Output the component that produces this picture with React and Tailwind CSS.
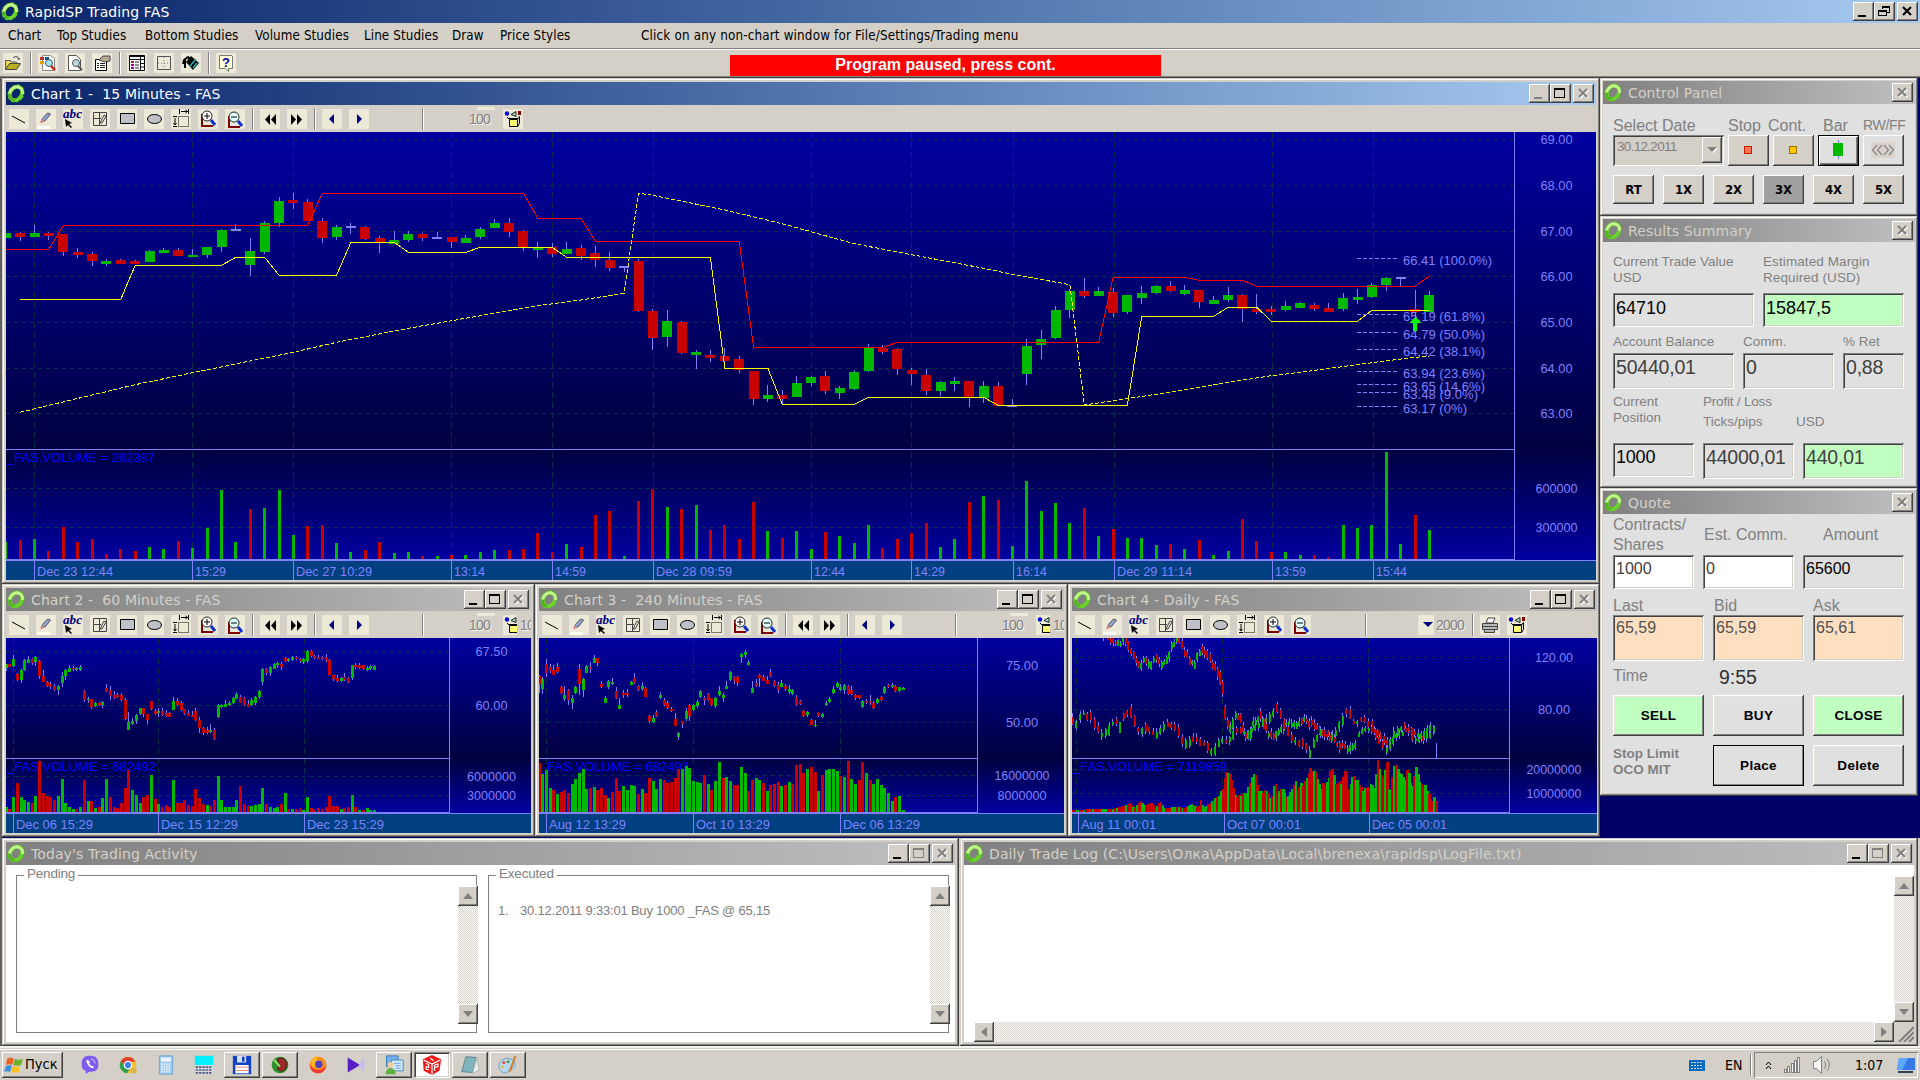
import React from 'react';

const bevel = 'shadow-[inset_-1px_-1px_0_#404040,inset_1px_1px_0_#ffffff,inset_-2px_-2px_0_#808080]';
const raised = `bg-[#d4d0c8] ${bevel}`;
const sunken = 'shadow-[inset_1px_1px_0_#808080,inset_-1px_-1px_0_#ffffff,inset_2px_2px_0_#404040,inset_-2px_-2px_0_#d4d0c8]';
const frame = 'bg-[#d4d0c8] shadow-[inset_-1px_-1px_0_#404040,inset_1px_1px_0_#d4d0c8,inset_-2px_-2px_0_#808080,inset_2px_2px_0_#ffffff]';
const ui = 'font-["DejaVu_Sans_Condensed","DejaVu_Sans",sans-serif]';
const caption = 'font-["DejaVu_Sans",sans-serif]';
const activeBar = 'bg-linear-to-r from-[#0a246a] to-[#a6caf0] text-white';
const idleBar = 'bg-linear-to-r from-[#808080] to-[#c0c0c0] text-[#d4d0c8]';

// "g309,324,305,342" -> colour, body top, body bottom, high, low
const parse = (s) => s.trim().split(/\s+/).map((t) => [t[0], ...t.slice(1).split(',').map(Number)]);

const candles1 = parse(`g309,324,305,342 r309,321,306,333 g309,321,284,322 r309,318,306,330 r312,366,312,378 r366,375,354,384
r372,393,367,408 g393,402,387,408 r390,402,387,402 r393,402,390,402 g363,396,360,396 g360,369,354,369 r360,378,354,378
g375,381,357,381 g351,375,351,384 g300,351,297,366 d297,302,282,302 g363,405,324,438 g279,366,273,372 g213,279,201,291
r210,219,189,237 r216,273,207,273 r273,324,264,339 g291,321,285,330 d288,293,279,312 r291,327,288,330 r324,336,318,369
g330,342,303,342 g312,330,303,336 r312,324,309,333 d321,326,306,326 r321,336,321,354 g324,339,315,339 g297,321,291,327
g279,294,267,294 r279,306,264,321 r303,351,300,363 g354,360,336,384 r351,372,339,381 g357,372,336,372 r354,378,345,390
r369,390,348,411 r390,414,366,423 d409,414,409,426 r393,543,387,546 r543,624,537,660 g573,621,540,651 r576,669,573,672
g666,675,660,717 r675,684,660,696 r678,693,654,702 r687,720,678,729 r723,807,723,825 g795,807,765,816 r795,807,780,822
g759,801,738,801 g741,759,738,768 r738,783,723,792 g774,789,768,807 g726,777,720,780 g654,723,642,726 r654,666,645,672
r657,717,654,735 r720,732,714,765 r735,783,717,795 g756,783,753,798 g753,762,741,783 r753,804,753,831 g768,804,753,819
r768,828,756,828 d825,830,807,830 g648,732,627,765 g627,645,600,687 g540,624,528,627 g483,540,477,564 r483,498,444,504
g483,498,471,498 r486,549,474,561 g495,546,495,552 g489,504,468,522 g468,489,465,492 r468,483,453,486 g480,492,465,495
r480,516,480,534 g510,522,498,522 g495,510,471,516 r495,537,492,576 r537,546,491,552 r537,546,528,555 g528,540,513,543
g519,534,516,534 r525,537,519,543 r534,546,519,546 g504,537,489,543 g501,510,477,522 g465,501,459,504 g444,465,441,483
d441,446,441,468 r537,546,480,570 g495,546,483,546`);

const volume1 = parse(`g1236 r1230 g1227 r1263 r1191 r1236 r1227 r1272 r1257 r1263 g1251 g1257 r1233 g1254 g1194 g1080 g1236 r1137 g1134
g1080 g1215 r1188 r1185 g1239 g1266 r1260 r1236 g1269 g1266 r1278 g1278 r1275 g1275 g1266 g1260 r1260 r1257 r1209 r1266 g1242
r1251 r1155 r1143 g1278 r1113 r1077 g1131 r1137 g1125 r1200 r1185 r1227 r1116 g1203 r1224 g1203 g1257 r1206 g1218 g1239 g1185
r1254 r1227 r1209 r1179 g1251 g1227 r1116 g1098 r1110 g1248 g1053 g1143 g1119 g1179 r1134 g1218 r1197 g1224 g1224 g1245 r1242
g1257 r1230 g1275 g1263 r1167 r1233 r1266 g1266 g1275 r1275 r1281 g1185 g1194 g1185 g966 g1242 r1155 g1200`);

const candles2 = parse(`g252,264,252,272 r252,262,252,262 g237,258,225,262 r281,300,278,302 g270,300,267,308 g241,270,238,272 g237,250,228,250
r237,248,234,254 g231,247,228,257 r242,288,240,298 r288,306,270,306 r305,318,302,322 r312,322,307,326 r318,331,312,333
g318,329,315,344 g288,310,276,321 g270,288,267,300 g264,275,255,276 r264,268,258,273 g263,271,262,273 g262,270,255,272
r333,360,330,366 g357,361,351,370 r358,381,357,387 g370,379,366,381 r368,375,366,378 g366,375,364,384 r324,336,312,336
r331,348,319,360 r346,353,334,358 r345,351,339,354 r345,361,339,363 r360,418,354,420 g427,450,396,450 g423,432,414,435
g405,423,402,432 g384,402,384,405 r384,402,384,410 r402,420,402,432 r363,387,363,391 r393,401,387,406 g393,400,383,412
r393,405,384,408 r399,408,390,411 r399,410,396,412 g363,390,350,390 r363,374,354,378 r368,390,363,392 r388,402,387,404
r399,407,390,408 r405,410,394,412 r393,420,384,424 r420,444,411,458 r444,459,441,464 r450,458,440,462 g450,456,432,460
r450,478,444,480 g375,411,372,414 g375,381,373,384 g372,381,360,381 g369,376,363,378 g354,370,351,372 g342,356,336,358
r351,368,345,370 r354,376,350,378 r373,380,360,382 g361,374,355,378 g351,369,348,374 g333,351,330,357 g267,306,264,315
r267,279,264,284 g261,279,258,288 g252,267,249,268 g249,256,246,265 r252,262,246,270 r234,243,230,246 g237,244,234,246
g231,241,228,243 r231,238,228,240 r237,244,234,248 g238,246,234,252 g213,242,210,248 r213,227,211,230 r228,234,225,238
r230,236,225,238 r231,237,228,240 r232,244,222,246 r240,284,238,286 r286,297,284,302 r294,304,285,306 g293,303,290,306
r292,300,279,302 r294,305,292,308 g255,294,254,300 r255,262,249,266 r255,264,249,268 r255,267,254,269 g264,270,258,272
g258,267,254,270 g257,269,254,270`);

const volume2 = parse(`g681 r687 g651 r609 g651 g660 g666 r669 g648 r543 r639 r648 r651 r660 g648 g597 g669 g681 g687 r687 g681 r600 g663
r663 g684 r681 g654 g597 r651 r681 r684 r669 r624 r570 g630 g645 g669 r651 r645 g585 r657 g672 r681 r675 r681 g600 r669 r669
r660 r675 r678 r627 r654 r672 g675 r678 r660 g588 g660 g681 g681 g681 g660 r618 r672 r678 g678 g675 g672 g624 r672 g681 g684
g681 r672 g639 r687 g687 r687 r684 g690 g651 r684 r690 r684 r687 r681 r648 r678 r678 g687 r684 r681 g645 r681 g690 r690 g684
g690 g690`);

const candles3 = parse(`r288,312,285,340 g297,328,291,342 r252,280,237,290 r262,272,252,280 r270,284,255,286 r261,276,248,278 r321,340,318,342
g346,358,319,362 r330,360,328,375 g354,370,345,386 g322,340,318,342 r267,312,252,344 g297,330,294,350 g258,278,256,280
r261,267,246,280 g234,249,226,250 r235,250,234,258 r312,322,303,324 g354,368,348,370 g303,320,301,328 g306,312,294,315
r333,354,321,356 g374,386,354,388 r339,346,330,354 r339,344,326,350 g305,314,303,316 r293,308,279,312 r318,330,314,333
g318,328,306,332 r324,350,321,352 r408,424,405,428 g414,425,404,428 r396,407,390,410 g345,354,336,356 r360,376,355,378
r369,384,364,387 r388,393,381,395 r417,437,400,438 g459,472,456,480 r423,432,423,444 g393,418,384,424 r376,408,372,424
g374,391,371,394 g366,379,360,384 g333,352,330,354 r354,360,348,376 r342,360,339,364 r355,375,354,378 g354,378,352,384
g333,345,318,348 g345,353,338,366 g319,326,302,328 g277,300,273,302 r291,302,288,312 r291,309,288,318 g221,232,219,249
g216,226,210,234 g245,254,240,256 g324,339,303,340 r308,317,297,322 r285,295,282,320 r291,303,286,304 r300,312,288,312
r276,288,267,290 r304,317,301,320 r315,330,307,340 g309,320,299,322 r318,328,312,332 g328,336,315,342 g330,342,328,344
r352,375,346,378 r363,373,361,376 r394,408,390,410 g395,405,392,410 r420,434,418,436 g434,438,421,441 r397,408,396,411
g403,410,400,413 g368,376,362,378 g357,366,351,369 g328,340,318,343 g310,321,305,324 g322,330,312,333 g315,330,313,342
r318,342,315,344 r330,342,318,345 r345,355,342,360 r346,354,345,358 g363,381,360,384 r363,369,357,372 r363,370,345,374
r369,385,364,388 g357,370,354,372 r352,360,348,363 g322,338,319,342 r315,321,312,325 g315,321,309,323 r318,334,316,337
g322,333,320,336 g324,330,322,331`);

const volume3 = parse(`r549 g582 g570 g624 r630 g642 r636 r630 r639 g612 g597 g579 g567 g627 r624 g621 r630 r624 r645 g654 r636 r594 r633
g618 g630 g615 g618 r642 g627 r639 r594 g603 g627 g597 r600 r609 r606 r594 r567 g567 g558 g564 g603 g606 g609 r585 g612 r630
g603 g546 r594 g591 g603 r615 r615 g561 g579 r633 r600 g594 g600 r609 g633 r615 r612 r606 g618 r615 g606 r612 r555 r552 r579
g567 r561 r576 g633 r585 g570 g567 g567 g573 r588 g591 r543 g597 g612 r600 r546 g579 r600 g612 g597 g615 g624 g639 g663 r651
g648 g690`);

const redBand = [[0, 358], [3, 358], [4, 286], [21, 286], [22, 190], [36, 190], [37, 265], [40, 265], [41, 334], [51, 334], [52, 652], [61, 652], [62, 637], [76, 637], [77, 442], [82, 442], [83, 451], [86, 451], [87, 469], [98, 469], [99, 438]];
const yellowBand = [[1, 508], [8, 508], [9, 406], [15, 406], [16, 382], [18, 382], [19, 436], [23, 436], [24, 337], [27, 337], [28, 367], [32, 367], [33, 352], [38, 352], [39, 382], [49, 382], [50, 715], [53, 715], [54, 823], [59, 823], [60, 802], [68, 802], [69, 826], [78, 826], [79, 559], [84, 559], [85, 532], [87, 532], [88, 574], [94, 574], [95, 541], [99, 541]];
const sar = [[1, 847], [3, 826], [6, 795], [9, 764], [13, 728], [17, 693], [20, 667], [23, 637], [28, 595], [33, 557], [37, 527], [40, 510], [43, 490], [44, 190], [45, 196], [50, 240], [54, 281], [56, 305], [59, 341], [63, 374], [68, 415], [70, 433], [74, 464], [75, 825], [80, 793], [85, 757], [88, 737], [90, 727], [95, 698], [98, 682], [99, 679]];
const fib = [[385, '66.41 (100.0%)', 89], [553, '65.19 (61.8%)', 82], [607, '64.79 (50.0%)', 82], [658, '64.42 (38.1%)', 82], [724, '63.94 (23.6%)', 82], [763, '63.65 (14.6%)', 82], [787, '63.48 (9.0%)', 75], [829, '63.17 (0%)', 64]];

// Daily chart: series given as [x, mid] knots, filled in between
const dailyA = [[122, 160], [150, 185], [165, 195], [188, 178], [200, 212], [220, 245], [232, 262], [245, 236], [257, 262], [275, 235], [290, 255], [310, 240], [325, 195], [343, 175], [358, 215], [385, 260], [408, 205], [425, 225], [445, 258], [460, 290], [470, 330], [480, 420], [490, 450], [508, 405], [522, 415], [535, 462], [548, 470], [560, 430], [580, 405], [600, 460], [625, 465], [655, 435], [680, 435], [705, 420], [745, 440], [765, 468], [785, 475], [805, 490], [832, 510], [855, 490]];
const dailyB = [[34, 425], [45, 437], [58, 410], [72, 405], [93, 412], [105, 445], [122, 470], [135, 460], [150, 430], [158, 415], [168, 450], [180, 410], [207, 400], [220, 435], [232, 465], [242, 435], [270, 465], [285, 455], [303, 430], [316, 430], [335, 440], [348, 465], [358, 500], [380, 480], [392, 470], [408, 490], [425, 495], [443, 520], [455, 495], [475, 480], [490, 475], [515, 445], [535, 465], [560, 440], [600, 420], [628, 385], [650, 430], [675, 490], [700, 485], [722, 520], [740, 475], [765, 455], [785, 470], [810, 440], [832, 385], [850, 430], [880, 420], [905, 442], [925, 488], [950, 510], [975, 450], [1000, 440], [1030, 478], [1060, 470], [1094, 450]];
const dailyC = [[866, 466], [880, 455], [900, 445], [930, 465], [955, 495], [980, 460], [1010, 450], [1045, 468], [1075, 440], [1090, 448]];
const dailyVol = [[36, 690], [100, 687], [150, 688], [190, 675], [200, 670], [215, 684], [233, 663], [245, 678], [262, 666], [275, 684], [289, 663], [300, 684], [340, 681], [360, 684], [378, 672], [400, 682], [408, 657], [415, 684], [430, 672], [450, 650], [470, 625], [478, 582], [486, 573], [497, 595], [508, 640], [520, 648], [540, 640], [548, 610], [560, 582], [568, 585], [575, 630], [590, 630], [612, 650], [623, 606], [630, 640], [645, 624], [660, 650], [672, 625], [682, 600], [690, 642], [695, 600], [705, 618], [724, 567], [740, 573], [755, 618], [765, 612], [775, 600], [788, 561], [800, 612], [815, 606], [828, 561], [837, 624], [848, 586], [862, 597], [878, 635], [890, 612], [912, 615], [921, 543], [935, 590], [948, 548], [955, 650], [962, 594], [972, 546], [985, 570], [1000, 600], [1008, 561], [1020, 618], [1032, 564], [1045, 612], [1060, 612], [1070, 640], [1080, 663], [1087, 651], [1094, 660]];

const rnd = (n) => {
  const v = Math.sin(n * 12.9898) * 43758.5453;
  return v - Math.floor(v);
};
const lerp = (knots, x) => {
  const i = Math.max(1, knots.findIndex((k) => k[0] >= x));
  const [x0, y0] = knots[i - 1];
  const [x1, y1] = knots[i];
  return y0 + ((y1 - y0) * (x - x0)) / (x1 - x0);
};
const fill = (knots, step) => {
  const out = [];
  for (let x = knots[0][0]; x <= knots[knots.length - 1][0]; x += step) out.push([x, lerp(knots, x)]);
  return out;
};
const dailyCandles = [[dailyA, 7.4], [dailyB, 10.6], [dailyC, 9]].flatMap(([knots, step]) =>
  fill(knots, step).map(([x, mid], i, all) => {
    const next = all[i + 1] ? all[i + 1][1] : mid;
    const slope = next - mid;
    const m = mid + (rnd(x) - 0.5) * 12;
    const h = 3 + rnd(x + 3) * 5 + Math.min(12, Math.abs(slope) / 3);
    const c = Math.abs(slope) < 4 ? (rnd(x + 2) > 0.5 ? 'r' : 'g') : slope > 0 ? 'r' : 'g';
    return { x: x / 2.904 - 11, c, top: m - h, bot: m + h, hi: m - h - 2 - rnd(x + 5) * 10, lo: m + h + rnd(x + 9) * 9 };
  })
);
const dailyBars = fill(dailyVol, 5.3).map(([x, y]) => ({ x: x / 2.904 - 11, c: rnd(x) > 0.52 ? 'r' : 'g', top: y + (y < 660 ? (rnd(x + 1) - 0.3) * 14 : 0) }));

const series = (data, x0, step) => data.map(([c, top, bot, hi, lo], i) => ({ x: x0 + i * step, c, top, bot, hi, lo }));
const colours = { g: '#00b800', r: '#c80000', d: '#8080ff' };

const Chart = ({ w, h, off, divider, base, axisX, labelX, prices, volumes, grid, times, candles, bars, bodyW, barW, volText, volW, children }) => {
  const y = (v) => v / 3 - off;
  const id = `bg${w}${axisX}`;
  return (
    <svg width={w} height={h} className="block shrink-0" shapeRendering="crispEdges" fontFamily="Liberation Sans, sans-serif" fontSize="13.5">
      <defs>
        <linearGradient id={id} x1="0" y1="0" x2="0" y2={h} gradientUnits="userSpaceOnUse">
          <stop offset="0" stopColor="#0000a0" />
          <stop offset={divider / h} stopColor="#000040" />
          <stop offset={base / h} stopColor="#0000a0" />
        </linearGradient>
        <clipPath id={`${id}c`}>
          <rect x="0" y="0" width={axisX} height={divider} />
        </clipPath>
      </defs>
      <rect width={w} height={h} fill={`url(#${id})`} />
      <g stroke="#003048" strokeDasharray="4 4">
        {[...prices, ...volumes].map(([v]) => <line key={v} x1="0" x2={axisX} y1={Math.floor(y(v)) + 0.5} y2={Math.floor(y(v)) + 0.5} />)}
        {grid.map((x) => <line key={x} y1="0" y2={base} x1={Math.floor(x) + 0.5} x2={Math.floor(x) + 0.5} strokeDasharray="6 4" />)}
      </g>
      <text x="1" y={divider + 13} fill="#0000ff" textLength={volW} lengthAdjust="spacingAndGlyphs">{volText}</text>
      {bars.map((b, i) => <rect key={i} x={b.x - barW / 2} y={y(b.top)} width={barW} height={Math.max(1, base - y(b.top))} fill={colours[b.c]} />)}
      <g clipPath={`url(#${id}c)`}>
        {candles.map((c, i) => (
          <g key={i} fill={colours[c.c]}>
            <rect x={Math.round(c.x - 0.5)} y={y(c.hi)} width="1" height={Math.max(1, (c.lo - c.hi) / 3)} fill="#8080ff" />
            <rect x={Math.round(c.x - bodyW / 2)} y={y(c.top)} width={bodyW} height={(c.bot - c.top) / 3} />
          </g>
        ))}
      </g>
      {children}
      <rect y={divider} width={axisX} height="1" fill="#8080ff" />
      <rect x={axisX} width="1" height={base} fill="#8080ff" />
      <rect y={base - 1} width={axisX} height="2" fill="#8080ff" />
      <rect y={base + 1} width={w} height={h - base - 1} fill="#004080" />
      <rect y={base} width={w} height="1" fill="#8080ff" />
      <g fill="#8080ff">
        {[...prices, ...volumes].map(([v, t, tw]) => (
          <text key={t} x={labelX - tw / 2} y={y(v) + 5} textLength={tw} lengthAdjust="spacingAndGlyphs">{t}</text>
        ))}
        {times.map(([x, t, tw]) => (
          <g key={t}>
            <rect x={Math.floor(x)} y={base} width="1" height={h - base} />
            <text x={x + 3} y={h - 4} textLength={tw} lengthAdjust="spacingAndGlyphs">{t}</text>
          </g>
        ))}
      </g>
    </svg>
  );
};

const Gear = () => (
  <svg width="18" height="20" viewBox="0 0 18 20" className="shrink-0">
    <g transform="rotate(32 9 9.500)" fill="none">
      <ellipse cx="9" cy="9.500" rx="6" ry="7.400" stroke="#58c020" strokeWidth="4.200" strokeDasharray="2.800 1.200" />
      <ellipse cx="9" cy="9.500" rx="5.600" ry="7" stroke="#6cd42c" strokeWidth="3.400" />
      <path d="M3.200 13C2 6 5 2.500 9.500 2.500c3 0 4.500 2 5.200 4" stroke="#c4f48c" strokeWidth="2.800" />
      <path d="M4 13c1 3 4 4.500 7 3" stroke="#48b018" strokeWidth="2" />
    </g>
  </svg>
);

const WinButton = ({ kind, dim }) => (
  <span className={`${raised} block h-[19px] w-[21px] shrink-0`}>
    <svg width="21" height="19" shapeRendering="crispEdges" fill="none" stroke={dim ? '#808080' : '#000'}>
      {kind === 'min' && <path d="M5 14h8" strokeWidth="2" />}
      {kind === 'max' && <path d="M4.500 4.500h10v9h-10zM4 5.500h11" />}
      {kind === 'restore' && <path d="M8.500 7V4.500h7v6H13M8 5.500h8M4.500 8.500h8v5h-8zM4 9.500h9" />}
      {kind === 'close' && dim && <path d="M7 6l8 8M15 6l-8 8" strokeWidth="2" stroke="#fff" shapeRendering="auto" />}
      {kind === 'close' && <path d="M6 5l8 8M14 5l-8 8" strokeWidth="2" shapeRendering="auto" />}
    </svg>
  </span>
);

const TitleBar = ({ title, bar = idleBar, buttons }) => (
  <div className={`${bar} ${caption} flex h-[23px] shrink-0 items-center pr-0.5 pl-px text-[14px]`}>
    <Gear />
    <span className="ml-1.5 flex-1 pt-px tracking-[0.1px] whitespace-pre">{title}</span>
    {buttons.map(([kind, dim]) => (
      <span key={kind} className={kind === 'close' && buttons.length > 1 ? 'ml-[2px]' : ''}>
        <WinButton kind={kind} dim={dim} />
      </span>
    ))}
  </div>
);

const icons = {
  line: <path d="M3 7l13 7" stroke="#000" />,
  pencil: <><path d="M1 17h13v3H1z" fill="#fff" /><path d="M5 13l1.500-3.500L11.500 4l3 1-5 6.500z" fill="#8fa4d8" stroke="#555" /><path d="M5 14l2-3" stroke="#e88" strokeWidth="2" /></>,
  abc: <><text x="0" y="9" fontFamily="Liberation Serif, serif" fontSize="13" fontStyle="italic" fontWeight="bold" fill="#000080" textLength="19" lengthAdjust="spacingAndGlyphs">abc</text><path d="M2 10l1 8 2-2 3 3 1-1-3-3 3-1z" fill="#000" /></>,
  panel: <path d="M3.500 3.500h13v13h-13zM9.500 3v13M3 9.500h8M10 14l4-8 2 1-4 7z" stroke="#444" fill="none" />,
  rect: <path d="M3.500 4.500h14v10h-14z" fill="#c0c0c8" stroke="#000" />,
  ellipse: <ellipse cx="10.500" cy="10" rx="7" ry="4.500" fill="#c0c0c8" stroke="#000" />,
  dims: <><path d="M2 7.500h4M2 17.500h4M4 9v7M2.500 14L4 16l1.500-2M8.500 0v5M17.500 0v5M10 2.500h7M14.500 1l2 1.500-2 1.500" stroke="#000" fill="none" /><path d="M7.500 7.500h10v10h-10z" fill="none" stroke="#000" strokeDasharray="1 1" /></>,
  zoomIn: <><path d="M4 5v12h11" fill="none" stroke="#800000" strokeWidth="2" /><circle cx="9" cy="7" r="5" fill="#fff" stroke="#222" /><path d="M6 7h6M9 4v6" stroke="#000" /><path d="M13 11l4 5" stroke="#1030d0" strokeWidth="3" /></>,
  zoomOut: <><path d="M4 7v11h11" fill="none" stroke="#800000" strokeWidth="2" /><circle cx="9" cy="8" r="5" fill="#e0ffff" stroke="#222" /><path d="M6 8h6" stroke="#000" /><path d="M13 12l4 5" stroke="#1030d0" strokeWidth="3" /></>,
  back: <path d="M10 5v11L5 10.500zM16 5v11l-5-5.500z" fill="#000" />,
  fwd: <path d="M4 5v11l5-5.500zM10 5v11l5-5.500z" fill="#000" />,
  left: <path d="M12 5v10L7 10z" fill="#000080" />,
  right: <path d="M8 5v10l5-5z" fill="#000080" />,
  down: <path d="M5 7h10l-5 5z" fill="#000080" />,
  toys: <><circle cx="4" cy="4.500" r="2.200" fill="#0000e0" /><path d="M8 5.500l5-3v5z" fill="#a0e0c0" stroke="#222" /><path d="M15 2h3v4h-3z" fill="#800000" /><path d="M6.500 10.500h8v7h-8z" fill="#ffff70" stroke="#000" /><path d="M6 10L4 8M14.500 10l2-2.500v7l-2 3M6 9.500h9" stroke="#000" fill="none" /></>,
  printer: <><path d="M6 8l2-5h7l-2 5z" fill="#fff" stroke="#444" /><path d="M2.500 8.500h15v6h-15zM4.500 14.500h10v3h-10z" fill="#b8b8b8" stroke="#444" /><path d="M3 11.500h14" stroke="#444" /></>,
  open: <><path d="M2.500 16.500v-9h5l1 1.500h5v3" fill="#e8d860" stroke="#555" /><path d="M2.500 16.500l4-6h11l-4 6z" fill="#b8b020" stroke="#444" /><path d="M10 5c2-2 5-2 6 1M14.500 6H17" fill="none" stroke="#333" /></>,
  find: <><path d="M4.500 2.500h8l4 3v12h-12z" fill="#fff" stroke="#888" /><path d="M2 4h4v3H2z" fill="#c03030" /><path d="M7 4h4v3H7z" fill="#205090" /><path d="M2 8h4v3H2z" fill="#e0a000" /><circle cx="11" cy="10" r="3.500" fill="#9fe8f0" stroke="#456" /><path d="M13 13l4 4" stroke="#d03020" strokeWidth="2.500" /></>,
  preview: <><path d="M3.500 2.500h8l4 4v11h-12z" fill="#fff" stroke="#555" /><circle cx="11" cy="10" r="3.500" fill="#b8dce0" stroke="#555" /><path d="M13 13l4 4" stroke="#555" strokeWidth="2" /></>,
  props: <><path d="M3.500 6.500h11v11h-11z" fill="#fff" stroke="#000" /><path d="M5 10.500h2M8 10.500h5M5 12.500h2M8 12.500h5M5 14.500h2M8 14.500h5" stroke="#222" /><path d="M7 7l4-4h7v5l-5 1z" fill="#b8a890" stroke="#445" /></>,
  table: <><path d="M2.500 2.500h15v15h-15z" fill="#fff" stroke="#000" /><path d="M3 3.500h14M3 6.500h14M13.500 3v14M14 10.500h4M14 14h4" stroke="#111" /><path d="M8 9h4M8 12h4M8 15h4" stroke="#222" /><path d="M4 9h3" stroke="#c02020" strokeWidth="2" /><path d="M4 12h3M4 15h3" stroke="#a000a0" strokeWidth="2" /></>,
  cross: <><path d="M3.500 3.500h13v13h-13z" fill="none" stroke="#555" /><path d="M4 10h12M10 4v12" stroke="#777" strokeDasharray="1 2" /></>,
  bucket: <><path d="M10 3l8 7-6 7-7-8z" fill="#000" /><path d="M9 13l6-7M12 15l4-5" stroke="#20b0b0" strokeWidth="1.600" /><path d="M9 6l-2-2-4 3-1 4M4 7v8" fill="none" stroke="#000" strokeWidth="2" /></>,
  help: <><path d="M3.500 2.500h12l1 1v12h-4v3l-3-3h-6z" fill="#ffffd8" stroke="#777" /><text x="6" y="14" fontSize="13" fontWeight="bold" fill="#0000a0">?</text></>,
};

const Tool = ({ name }) => (
  <svg width="20" height="20" className="shrink-0 bg-[#ece9d8]" fontFamily="Liberation Sans, sans-serif">{icons[name]}</svg>
);

const Sep = ({ className = '' }) => <span className={`${className} h-[22px] w-0.5 shrink-0 border-r border-l border-r-white border-l-[#808080]`} />;

const Grayed = ({ children }) => (
  <span className="text-[14px] text-[#808080] [text-shadow:1px_1px_0_#f4f4f0]">{children}</span>
);

const drawTools = ['line', 'pencil', 'abc', 'panel', 'rect', 'ellipse', 'dims', 'zoomIn', 'zoomOut'];

const ChartTools = ({ daily, clipped }) => (
  <div className="flex h-[27px] shrink-0 items-center overflow-hidden pt-px pl-[3px]">
    <div className="flex gap-[7px]">
      {drawTools.map((t) => <Tool key={t} name={t} />)}
    </div>
    {daily ? (
      <>
        <Sep className="mr-[51px] ml-[54px]" />
        <Tool name="down" />
        <span className="-ml-1 w-[37px] bg-[#d4d0c8] pl-0.5 tracking-[-0.8px]"><Grayed>2000</Grayed></span>
        <Sep className="mr-[6px] ml-px" />
        <div className="flex gap-[7px]">
          <Tool name="printer" />
          <Tool name="toys" />
        </div>
      </>
    ) : (
      <>
        <Sep className="mr-[6px] ml-[7px]" />
        <div className="flex gap-[7px]">
          <Tool name="back" />
          <Tool name="fwd" />
        </div>
        <Sep className="mr-[6px] ml-[7px]" />
        <div className="flex gap-[7px]">
          <Tool name="left" />
          <Tool name="right" />
        </div>
        <Sep className="mr-[45px] ml-[53px]" />
        <span className="w-[34px] bg-[linear-gradient(#ece9d8,#ece9d8)] bg-[length:18px_3px] bg-[position:8px_0] bg-no-repeat tracking-[-0.8px]"><Grayed>100</Grayed></span>
        <span className={clipped ? 'w-[14px] overflow-hidden' : ''}><Tool name="toys" /></span>
        {clipped && <span className="ml-[3px] w-[11px] overflow-hidden tracking-[-0.8px]"><Grayed>10</Grayed></span>}
      </>
    )}
  </div>
);

const Window = ({ className, title, bar, buttons, children }) => (
  <section className={`${frame} ${className} flex shrink-0 flex-col p-1`}>
    <TitleBar title={title} bar={bar} buttons={buttons} />
    {children}
  </section>
);

const Panel = ({ className, title, children }) => (
  <section className={`${frame} ${className} flex shrink-0 flex-col p-[3px]`}>
    <TitleBar title={title} buttons={[['close', true]]} />
    <div className="flex-1 bg-[#e0e0e0] pl-2.5 text-[#808080]">{children}</div>
  </section>
);

const Field = ({ className, children }) => (
  <div className={`${sunken} ${className} shrink-0 pl-[3px] whitespace-nowrap`}>{children}</div>
);

const PushButton = ({ className = '', bg = 'bg-[#e0e0e0]', children }) => (
  <button className={`${bg} ${className} flex h-[41px] w-[91px] items-center justify-center pt-0.5 text-[13.5px] font-bold tracking-[0.3px] text-black shadow-[inset_-1px_-1px_0_#404040,inset_1px_1px_0_#ffffff,inset_-2px_-2px_0_#808080,inset_2px_2px_0_#e8e4dc]`}>{children}</button>
);

const ControlPanel = () => (
  <Panel title="Control Panel" className="h-[138px]">
    <div className="flex h-[31px] items-center pt-3 text-[16px]">
      <span className="w-[115px]">Select Date</span>
      <span className="w-[40px]">Stop</span>
      <span className="w-[55px]">Cont.</span>
      <span className="w-[40px]">Bar</span>
      <span className="text-[14px] tracking-[-0.3px]">RW/FF</span>
    </div>
    <div className="flex gap-1">
      <div className={`${sunken} flex h-[31px] w-[111px] justify-between bg-[#d4d0c8] p-0.5`}>
        <span className="pl-0.5 text-[13.5px] leading-5 tracking-[-0.7px]">30.12.2011</span>
        <span className={`${raised} flex h-[26px] w-5 items-center justify-center`}>
          <svg width="11" height="6"><path d="M1 1h10L6 6z" fill="#fff" /><path d="M0 0h10L5 5z" fill="#808080" /></svg>
        </span>
      </div>
      <span className={`${raised} flex h-[31px] w-[41px] items-center justify-center pr-0.5 pb-0.5`}>
        <span className="size-2 border border-[#c02000] bg-[#ff7050]" />
      </span>
      <span className={`${raised} flex h-[31px] w-[41px] items-center justify-center pr-0.5 pb-0.5`}>
        <span className="size-2 border border-[#a07000] bg-[#ffc800]" />
      </span>
      <span className="flex h-[31px] w-[41px] items-center justify-center bg-[#e0e0e0] pr-px pb-0.5 shadow-[inset_0_0_0_1px_#000,inset_2px_2px_0_#fff,inset_-2px_-2px_0_#404040,inset_-3px_-3px_0_#808080]">
        <svg width="10" height="19"><path d="M5.500 0v19" stroke="#8080ff" /><path d="M0 3h10v13H0z" fill="#00b800" /></svg>
      </span>
      <span className={`${bevel} flex h-[31px] w-[41px] items-center justify-center bg-[#e0e0e0] pr-px pb-0.5`}>
        <svg width="24" height="16" className="bg-[#dcd4cc]" fill="none" stroke="#888" strokeWidth="1.300"><path d="M6 3L1.500 8 6 13M11 3L6.500 8l4.500 5M13 3l4.500 5-4.500 5M18 3l4.500 5-4.500 5" /></svg>
      </span>
    </div>
    <div className="mt-[9px] flex gap-[9px]">
      {['RT', '1X', '2X', '3X', '4X', '5X'].map((t) => (
        <button key={t} className={`${bevel} ${ui} ${t === '3X' ? 'bg-[#a0a0a0]' : 'bg-[#d4d0c8]'} flex h-[29px] w-[41px] items-center justify-center text-[13px] font-bold text-black`}>{t}</button>
      ))}
    </div>
  </Panel>
);

const ResultsSummary = () => (
  <Panel title="Results Summary" className="h-[272px]">
    <div className="flex h-[51px] pt-3 text-[13.5px] leading-4">
      <span className="w-[150px]">Current Trade Value<br />USD</span>
      <span className="tracking-[0.1px]">Estimated Margin<br />Required (USD)</span>
    </div>
    <div className="flex gap-[9px] text-[18px] leading-[31px] text-black">
      <Field className="h-[34px] w-[141px]">64710</Field>
      <Field className="h-[34px] w-[141px] bg-[#c0ffc0]">15847,5</Field>
    </div>
    <div className="flex h-[26px] items-center pt-1 text-[13.5px]">
      <span className="w-[130px]">Account Balance</span>
      <span className="w-[100px]">Comm.</span>
      <span>% Ret</span>
    </div>
    <div className="flex gap-[9px] text-[19.5px] leading-[29px] tracking-[-0.2px] text-[#404040]">
      <Field className="h-[36px] w-[121px]">50440,01</Field>
      <Field className="h-[36px] w-[91px]">0</Field>
      <Field className="h-[36px] w-[61px]">0,88</Field>
    </div>
    <div className="flex h-[54px] pt-[5px] text-[13.5px] leading-4">
      <span className="w-[90px]">Current<br />Position</span>
      <span className="w-[93px] leading-5"><span className="-mt-0.5 block tracking-[-0.2px]">Profit / Loss</span>Ticks/pips</span>
      <span className="mt-5">USD</span>
    </div>
    <div className="flex gap-[9px] text-[19.5px] leading-[29px] tracking-[-0.2px] text-[#404040]">
      <Field className="h-[34px] w-[81px] text-[18px] text-black">1000</Field>
      <Field className="h-[36px] w-[91px]">44000,01</Field>
      <Field className="h-[36px] w-[101px] bg-[#c0ffc0]">440,01</Field>
    </div>
  </Panel>
);

const Quote = () => (
  <Panel title="Quote" className="h-[308px]">
    <div className="flex h-[41px] items-center pt-px text-[16px] leading-5">
      <span className="w-[91px]">Contracts/<br />Shares</span>
      <span className="w-[119px]">Est. Comm.</span>
      <span>Amount</span>
    </div>
    <div className="flex gap-[9px] text-[16px] leading-[27px] text-[#404040]">
      <Field className="h-[34px] w-[81px] bg-white">1000</Field>
      <Field className="h-[34px] w-[91px] bg-white">0</Field>
      <Field className="h-[34px] w-[101px] text-black">65600</Field>
    </div>
    <div className="flex h-[26px] items-end text-[16px] leading-[19px]">
      <span className="w-[101px]">Last</span>
      <span className="w-[99px]">Bid</span>
      <span>Ask</span>
    </div>
    <div className="flex gap-[9px] text-[16px] leading-[25px] text-[#505050]">
      <Field className="h-[46px] w-[91px] bg-[#ffdfc0]">65,59</Field>
      <Field className="h-[46px] w-[91px] bg-[#ffdfc0]">65,59</Field>
      <Field className="h-[46px] w-[91px] bg-[#ffdfc0]">65,61</Field>
    </div>
    <div className="flex h-[34px] text-[16px] leading-[30px]">
      <span className="w-[106px]">Time</span>
      <span className="text-[19.5px] leading-[32px] text-[#303030]">9:55</span>
    </div>
    <div className="flex gap-[9px]">
      <PushButton bg="bg-[#c0ffc0]">SELL</PushButton>
      <PushButton>BUY</PushButton>
      <PushButton bg="bg-[#c0ffc0]">CLOSE</PushButton>
    </div>
    <div className="mt-[9px] flex gap-[9px]">
      <span className="w-[91px] pt-px text-[13.5px] leading-4 font-bold">Stop Limit<br />OCO MIT</span>
      <PushButton className="outline outline-black -outline-offset-1">Place</PushButton>
      <PushButton>Delete</PushButton>
    </div>
  </Panel>
);

const Arrow = ({ dir }) => {
  const turn = { up: 'rotate-0', down: 'rotate-180', left: '-rotate-90', right: 'rotate-90' };
  return (
    <span className={`${raised} flex size-5 shrink-0 items-center justify-center`}>
      <svg width="10" height="6" className={turn[dir]}><path d="M5 0l5 6H0z" fill="#808080" /></svg>
    </span>
  );
};

const track = 'flex justify-between bg-[repeating-conic-gradient(#ffffff_0_25%,#d4d0c8_0_50%)] bg-[length:2px_2px]';

const TradeBox = ({ className, label, children }) => (
  <div className={`${className} flex h-[167px] flex-col text-[13.5px] text-[#808080]`}>
    <div className="flex h-[17px] items-center">
      <span className="mt-[9px] h-2 w-2 border-t border-l border-[#808080]" />
      <span className="px-[3px] tracking-[-0.2px]">{label}</span>
      <span className="mt-[9px] h-2 flex-1 border-t border-r border-[#808080]" />
    </div>
    <div className="flex flex-1 justify-between border-x border-b border-[#808080]">
      <div className="pt-[18px] pl-[9px] text-[13px] tracking-[-0.2px]">{children}</div>
      <div className={`${track} -mr-0.5 mt-[3px] h-[138px] w-5 flex-col`}>
        <Arrow dir="up" />
        <Arrow dir="down" />
      </div>
    </div>
  </div>
);

const chartButtons = [['min'], ['max'], ['close', true]];
const logButtons = [['min'], ['max', true], ['close', true]];

const menu = [
  ['Chart', 'w-[49px]'],
  ['Top Studies', 'w-[88px]'],
  ['Bottom Studies', 'w-[110px]'],
  ['Volume Studies', 'w-[109px]'],
  ['Line Studies', 'w-[88px]'],
  ['Draw', 'w-[48px]'],
  ['Price Styles', 'w-[141px]'],
];

const task = {
  viber: <><path d="M12 1C5 1 2 4 2 11c0 5 2 7 5 8v4l4-3c8 0 11-2 11-9S19 1 12 1z" fill="#7d5cf0" /><path d="M8 6c-2 2 4 10 7 10 2-1 2-2 0-3-2 1-4-2-4-3 2-1 0-4-3-4z" fill="#fff" /><path d="M13 5c3 0 5 2 5 5" fill="none" stroke="#fff" /></>,
  chrome: <><circle cx="12" cy="12" r="10" fill="#f0c030" /><path d="M3 8a10 10 0 0 1 18 0h-9a4 4 0 0 0-4 5z" fill="#e04030" /><path d="M3 8a10 10 0 0 0 8 14l4-7a4 4 0 0 1-6-2z" fill="#30a050" /><circle cx="12" cy="12" r="4.500" fill="#4080e8" stroke="#fff" strokeWidth="1.500" /><circle cx="19" cy="19" r="3.500" fill="#d8b050" /></>,
  calc: <><path d="M4 1h16v22H4z" fill="#9cc8ec" stroke="#68a0cc" /><path d="M6 3h12v5H6z" fill="#e8f4ff" /><path d="M6 11h12M6 14h12M6 17h12M6 20h12" stroke="#e8f4ff" strokeWidth="2" strokeDasharray="2 1" /></>,
  keys: <><path d="M1 1h22v11H1z" fill="#00f0ff" /><path d="M1 12h22v11H1z" fill="#d8d8e0" /><path d="M2 14.500h20M2 18h20M2 21.500h20" stroke="#506080" strokeWidth="2" strokeDasharray="3 1" /></>,
  floppy: <><path d="M1 1h22v22H1z" fill="#1040c8" /><path d="M6 1h11v8H6z" fill="#d8e0f0" /><path d="M12 2h3v6h-3z" fill="#1040c8" /><path d="M4 12h16v10H4z" fill="#fff" /><path d="M4 14.500h16M4 18.500h16" stroke="#e07070" /></>,
  bug: <><circle cx="12" cy="12" r="10" fill="#309030" /><path d="M9 5c7-4 12 2 11 8s-7 8-10 5 3-5 2-7-4-3-3-6z" fill="#a02828" stroke="#401010" /><path d="M5 6l7 8" stroke="#90e060" strokeWidth="2.500" /></>,
  firefox: <><circle cx="12" cy="12" r="10" fill="#ff8a18" /><path d="M3 10c1-4 4-8 8-9-2 4 2 7 7 7-1 5-3 7-8 7s-5-2-7-5z" fill="#ffb820" /><circle cx="13" cy="11" r="4.500" fill="#5040c0" /><path d="M2 11c0 7 5 11 10 11s10-4 10-10c-2 4-5 6-10 6s-8-3-10-7z" fill="#f03838" /></>,
  play: <><path d="M2 3l15 9-15 9z" fill="#5a20c8" /><path d="M22 4v16l-7-8z" fill="#c8b8f4" /></>,
  people: <><path d="M3 1h14v13H3z" fill="#78b0e8" stroke="#3070b0" /><path d="M9 6h14v13H9z" fill="#d0e8fc" stroke="#3878b8" /><path d="M12 10h8M14 13h6M14 16h6" stroke="#5898d8" /><circle cx="8" cy="12" r="3.500" fill="#f0d0a0" /><path d="M2 23c0-10 12-10 12 0z" fill="#60b040" /></>,
  dice: <><path d="M12 0l11 5-2 14-9 5-10-5L1 5z" fill="#f01818" /><path d="M2 6l10 5 10-5M12 11v12M10 4l4 3M5 10l3 2v3l-3-1v3l3 1M15 12v7M15 12l4-1v3l-4 1" stroke="#fff" fill="none" strokeWidth="1.500" /></>,
  note: <><path d="M7 2l13 1-5 18-13-1z" fill="#80b4bc" stroke="#508088" /><path d="M20 3l3 15-8 4z" fill="#e8eef0" stroke="#aaa" /></>,
  paint: <><path d="M12 4C4 4 1 9 1 14s6 9 10 7c1-3 3-3 6-4 7-3 3-13-5-13z" fill="#b8d8f0" stroke="#6898c0" /><circle cx="7" cy="9" r="1.800" fill="#e04040" /><circle cx="12" cy="8" r="1.800" fill="#40a040" /><circle cx="5" cy="14" r="1.800" fill="#e0c030" /><path d="M21 1l-7 19" stroke="#d08030" strokeWidth="2.500" /></>,
};

const tasks = [['viber'], ['chrome'], ['calc'], ['keys'], ['floppy', 'up'], ['bug', 'up'], ['firefox'], ['play'], ['people', 'up'], ['dice', 'down'], ['note', 'up'], ['paint', 'up']];

const Taskbar = () => (
  <footer className={`${ui} flex h-[31px] shrink-0 items-center border-t border-white bg-[#d4d0c8] pt-px pb-px pl-0.5 text-[14px] text-black`}>
    <button className={`${raised} flex h-[26px] w-[61px] items-center gap-px pl-0.5`}>
      <svg width="20" height="20">
        <path d="M3 4c3-2 5-1 7 0l-2 6c-2-1-4-1-6 0z" fill="#f06020" />
        <path d="M11 4c3 1 5 1 8 0l-2 6c-3 1-5 1-8 0z" fill="#70b030" />
        <path d="M2 11c2-1 4-1 6 0l-2 6c-2-1-4-1-6 0z" fill="#3890e0" />
        <path d="M9 11c2 1 5 1 7 0l-1 6c-3 1-5 1-8 0z" fill="#f8c020" />
      </svg>
      <span className="text-[14.5px]">Пуск</span>
    </button>
    <div className="ml-[9px] flex gap-0.5">
      {tasks.map(([name, state]) => (
        <span key={name} className={`flex h-[26px] w-[36px] items-center justify-center ${state === 'up' ? raised : ''} ${state === 'down' ? `${sunken} bg-white` : ''}`}>
          <svg width="20" height="20" viewBox="0 0 24 24">{task[name]}</svg>
        </span>
      ))}
    </div>
    <div className="ml-auto flex items-center pr-0.5">
      <svg width="16" height="11"><path d="M0 0h16v11H0z" fill="#0868c0" /><path d="M2 2.500h12M2 5.500h12M2 8.500h12" stroke="#b8e0ff" strokeDasharray="2 1" /></svg>
      <span className="mr-[6px] ml-[20px] w-[19px]">EN</span>
      <Sep />
      <div className="ml-[2px] flex h-[26px] w-[164px] items-center pl-[11px] shadow-[inset_1px_1px_0_#808080,inset_-1px_-1px_0_#ffffff]">
        <svg width="7" height="9" fill="none" stroke="#000"><path d="M1 4l2.500-3L6 4M1 8l2.500-3L6 8" /></svg>
        <svg width="17" height="16" className="ml-[12px]" fill="#f4f4f4" stroke="#808080" shapeRendering="crispEdges"><path d="M.5 12.500h2v3h-2zM3.500 9.500h2v6h-2zM7.500 6.500h2v9h-2zM10.500 3.500h2v12h-2zM13.500.5h2v15h-2z" /></svg>
        <svg width="22" height="20" className="ml-[11px]" fill="#f8f8f8" stroke="#808080"><path d="M1.500 6.500h3l5-5v17l-5-5h-3z" /><path d="M12 6c2 2 2 6 0 8M15 4c3 3 3 9 0 12" fill="none" /></svg>
        <span className="ml-[21px] w-[42px]">1:07</span>
        <svg width="18" height="15"><path d="M2 0h16v12H0z" fill="#3878e8" /><path d="M2 0h9L5 12H0z" fill="#60a8ff" /><path d="M1 13h15v2H1z" fill="#304050" /></svg>
      </div>
    </div>
  </footer>
);

const X0 = -0.2;
const STEP = 14.38;
const points = (list) => list.map(([i, v]) => `${(X0 + i * STEP).toFixed(1)},${(v / 3 - 2).toFixed(1)}`).join(' ');
const small = { w: 525, h: 195, off: 58, divider: 120, base: 175, bodyW: 3 };

export default function App() {
  return (
    <div className='flex h-[1080px] w-[1920px] flex-col overflow-hidden bg-[#d4d0c8] font-["Liberation_Sans",Arial,sans-serif]'>
      <TitleBar title="RapidSP Trading FAS" bar={activeBar} buttons={[['min'], ['restore'], ['close']]} />

      {/* Menu */}
      <nav className={`${ui} flex h-[25px] shrink-0 items-center pl-2 text-[13.3px] tracking-[0.1px] text-black`}>
        {menu.map(([label, width]) => <span key={label} className={`${width} shrink-0 whitespace-nowrap`}>{label}</span>)}
        <span className="tracking-[0.18px] whitespace-nowrap">Click on any non-chart window for File/Settings/Trading menu</span>
      </nav>

      {/* Toolbar */}
      <div className="flex h-7 shrink-0 items-center border-t border-[#808080] pl-[3px] shadow-[inset_0_1px_0_#fff]">
        <Tool name="open" />
        <Sep className="mr-[6px] ml-[7px]" />
        <div className="flex gap-[7px]"><Tool name="find" /><Tool name="preview" /><Tool name="props" /></div>
        <Sep className="mr-[6px] ml-[7px]" />
        <div className="flex gap-[7px]"><Tool name="table" /><Tool name="cross" /><Tool name="bucket" /></div>
        <Sep className="mr-[6px] ml-[7px]" />
        <Tool name="help" />
        <div className="mt-1.5 ml-[494px] h-[21px] w-[431px] self-start bg-[#ff0000] text-center text-[16px] leading-[19px] font-bold text-white">Program paused, press cont.</div>
      </div>

      {/* MDI area */}
      <div className="flex h-[762px] shrink-0 border-t border-l-2 border-t-[#808080] border-l-[#606060] bg-[#000066] pt-px shadow-[inset_0_1px_0_#404040]">
        <div className="flex w-[1598px] shrink-0 flex-col">
          <Window className="h-[506px]" title="Chart 1 -  15 Minutes - FAS" bar={activeBar} buttons={[['min', true], ['max'], ['close', true]]}>
            <ChartTools />
            <Chart
              w={1590} h={448} off={2} divider={317} base={428} axisX={1508} labelX={1550.5} bodyW={10} barW={3}
              prices={[[28, '69.00', 32], [166, '68.00', 32], [304, '67.00', 32], [439, '66.00', 32], [577, '65.00', 32], [715, '64.00', 32], [850, '63.00', 32]]}
              volumes={[[1075, '600000', 42], [1192, '300000', 42]]}
              grid={[28, 186, 287, 445, 546, 647, 805, 905, 1007, 1108, 1266, 1367]}
              times={[[28, 'Dec 23 12:44', 76], [186, '15:29', 31], [287, 'Dec 27 10:29', 76], [445, '13:14', 31], [546, '14:59', 31], [647, 'Dec 28 09:59', 76], [805, '12:44', 31], [905, '14:29', 31], [1007, '16:14', 31], [1108, 'Dec 29 11:14', 75], [1266, '13:59', 31], [1367, '15:44', 31]]}
              candles={series(candles1, X0, STEP)}
              bars={series(volume1, X0, STEP)}
              volText="_FAS.VOLUME = 282387" volW={148}
            >
              <g fill="none">
                <polyline points={points(redBand)} stroke="#ff0000" />
                <polyline points={points(yellowBand)} stroke="#ffff00" />
                <polyline points={points(sar)} stroke="#ffff00" strokeDasharray="4 2" />
              </g>
              {fib.map(([v, t, tw]) => (
                <g key={t}>
                  <path d={`M1351 ${Math.floor(v / 3 - 2) + 0.5}h40`} stroke="#8080ff" strokeDasharray="4 2" />
                  <text x="1397" y={v / 3 + 5} fill="#8080ff" textLength={tw} lengthAdjust="spacingAndGlyphs">{t}</text>
                </g>
              ))}
              <path d="M1409 185l6 6h-4v8h-4v-8h-4z" fill="#00ff00" />
            </Chart>
          </Window>

          <div className="flex">
            <Window className="h-[253px] w-[533px]" title="Chart 2 -  60 Minutes - FAS" buttons={chartButtons}>
              <ChartTools clipped />
              <Chart
                {...small} axisX={443} labelX={485.5} barW={3}
                prices={[[214, '67.50', 32], [376, '60.00', 32]]}
                volumes={[[589, '6000000', 49], [646, '3000000', 49]]}
                grid={[7, 152, 298]}
                times={[[7, 'Dec 06 15:29', 77], [152, 'Dec 15 12:29', 77], [298, 'Dec 23 15:29', 77]]}
                candles={series(candles2, 0.2, 3.72)}
                bars={series(volume2, 0.2, 3.72)}
                volText="_FAS.VOLUME = 682492" volW={149}
              />
            </Window>
            <Window className="h-[253px] w-[533px]" title="Chart 3 -  240 Minutes - FAS" buttons={chartButtons}>
              <ChartTools clipped />
              <Chart
                {...small} axisX={438} labelX={483} barW={3}
                prices={[[256, '75.00', 32], [427, '50.00', 32]]}
                volumes={[[586, '16000000', 55], [646, '8000000', 49]]}
                grid={[7, 154, 301]}
                times={[[7, 'Aug 12 13:29', 77], [154, 'Oct 10 13:29', 74], [301, 'Dec 06 13:29', 77]]}
                candles={series(candles3, 0, 3.68)}
                bars={series(volume3, 0, 3.68)}
                volText="_FAS.VOLUME = 682493" volW={149}
              />
            </Window>
            <Window className="h-[253px] w-[532px] pr-[3px]" title="Chart 4 - Daily - FAS" buttons={chartButtons}>
              <ChartTools daily />
              <Chart
                {...small} axisX={437} labelX={482} barW={2.6}
                prices={[[232, '120.00', 38], [388, '80.00', 32]]}
                volumes={[[568, '20000000', 55], [640, '10000000', 55]]}
                grid={[4, 150, 296]}
                times={[[6, 'Aug 11 00:01', 75], [152, 'Oct 07 00:01', 74], [297, 'Dec 05 00:01', 75]]}
                candles={dailyCandles}
                bars={dailyBars}
                bodyW={2}
                volText="_FAS.VOLUME = 7119859" volW={154}
              >
                <rect x="364" y="105" width="1" height="15" fill="#8080ff" />
              </Chart>
            </Window>
          </div>
        </div>

        <aside className="flex w-[318px] flex-col">
          <ControlPanel />
          <ResultsSummary />
          <Quote />
        </aside>
      </div>

      {/* Logs */}
      <div className="flex h-[208px] shrink-0 gap-px border-l-2 border-[#606060]">
        <Window className="w-[957px]" title="Today's Trading Activity" buttons={logButtons}>
          <div className="flex flex-1 bg-white pt-px pl-2.5">
            <TradeBox className="w-[461px]" label="Pending" />
            <TradeBox className="ml-[11px] w-[461px]" label="Executed">
              <span className="inline-block w-[22px]">1.</span>30.12.2011 9:33:01 Buy 1000 _FAS @ 65,15
            </TradeBox>
          </div>
        </Window>
        <Window className="w-[958px]" title="Daily Trade Log (C:\Users\Олка\AppData\Local\brenexa\rapidsp\LogFile.txt)" buttons={logButtons}>
          <div className="flex flex-1 flex-col bg-white pt-[11px]">
            <div className={`${track} ml-auto w-5 flex-1 flex-col`}>
              <Arrow dir="up" />
              <Arrow dir="down" />
            </div>
            <div className="flex pl-2.5">
              <div className={`${track} flex-1`}>
                <Arrow dir="left" />
                <Arrow dir="right" />
              </div>
              <svg width="20" height="20" className="bg-[#d4d0c8]" stroke="#808080" strokeWidth="2"><path d="M5 20L20 5M10 20L20 10M15 20l5-5" /></svg>
            </div>
          </div>
        </Window>
      </div>

      <div className="h-[3px] shrink-0 border-b border-[#d4d0c8] bg-[#f4f2ee]" />
      <Taskbar />
    </div>
  );
}
